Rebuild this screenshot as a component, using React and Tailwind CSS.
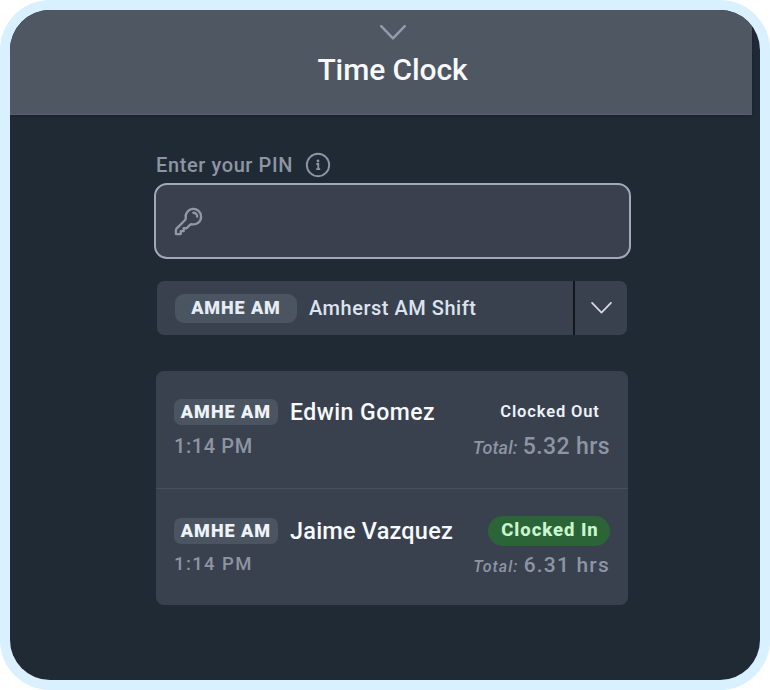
import { HiOutlineKey } from 'react-icons/hi2'

const entries = [
  {
    shift: 'AMHE AM',
    name: 'Edwin Gomez',
    time: '1:14 PM',
    hours: '5.32 hrs',
    status: 'Clocked Out',
    rowClass: 'pt-[24px]',
    nameClass: 'text-[23px] tracking-[0.48px] pt-[2px]',
    timeClass: 'text-[20px] tracking-[0.6px]',
    statusClass: 'text-[16.5px] font-semibold tracking-[0.85px] text-[#eef2f8]',
    totalClass: 'text-[18px] tracking-[0.2px]',
    hoursClass: 'text-[23px] tracking-[0.4px]',
    totalRowClass: 'pt-[3px]',
  },
  {
    shift: 'AMHE AM',
    name: 'Jaime Vazquez',
    time: '1:14 PM',
    hours: '6.31 hrs',
    status: 'Clocked In',
    rowClass: 'pt-[25px]',
    nameClass: 'text-[23.5px] tracking-[0.2px] pt-[2px]',
    timeClass: 'text-[18.5px] tracking-[1.4px]',
    statusClass: 'bg-[#2b6437] text-[18.5px] font-extrabold tracking-[0.95px] text-[#c9f5cf]',
    totalClass: 'text-[16px] tracking-[1.1px]',
    hoursClass: 'text-[21px] tracking-[1.2px]',
    totalRowClass: 'pt-[4px]',
  },
]

function Chevron({ className, strokeWidth }) {
  return (
    <svg viewBox="0 0 24 14" fill="none" stroke="currentColor" strokeWidth={strokeWidth}
      strokeLinecap="round" strokeLinejoin="round" className={className}>
      <path d="M1 1 L12 12.5 L23 1" />
    </svg>
  )
}

function InfoIcon() {
  return (
    <svg viewBox="0 0 26 26" fill="none" stroke="currentColor" className="h-[26px] w-[26px]">
      <circle cx="13" cy="13" r="11.2" strokeWidth="1.9" />
      <circle cx="13" cy="9" r="1.4" fill="currentColor" stroke="none" />
      <path d="M11.3 12h2v5M11.2 17.2h4" strokeWidth="1.8" />
    </svg>
  )
}

function EntryRow({ entry }) {
  return (
    <div className={`flex h-full justify-between px-[18px] ${entry.rowClass}`}>
      <div>
        <div className="flex h-[34px] items-center">
          <span className="flex h-[26px] w-[104px] items-center justify-center rounded-[7px] bg-[#4b5561] pb-px text-[18px] font-black tracking-[1px] text-[#eef3fb]">
            {entry.shift}
          </span>
          <span className={`ml-[12px] font-medium text-[#f7f9fd] ${entry.nameClass}`}>{entry.name}</span>
        </div>
        <div className={`flex h-[34px] items-center pb-px font-medium text-[#8d95a3] ${entry.timeClass}`}>{entry.time}</div>
      </div>
      <div className="flex flex-col items-end pt-[2px]">
        <span className={`flex h-[30px] w-[122px] items-center justify-center rounded-full pl-[2px] ${entry.statusClass}`}>
          {entry.status}
        </span>
        <div className={`flex h-[40px] items-baseline font-medium text-[#8d95a3] ${entry.totalRowClass}`}>
          <span className={`mr-[5px] italic ${entry.totalClass}`}>Total:</span>
          <span className={entry.hoursClass}>{entry.hours}</span>
        </div>
      </div>
    </div>
  )
}

export default function App() {
  return (
    <div className="h-[690px] w-[770px] overflow-hidden rounded-[50px] bg-[#d8f0ff] p-[10px] font-['Roboto','Liberation_Sans',sans-serif] whitespace-nowrap">
      <div className="h-[670px] w-[750px] overflow-hidden rounded-[40px] bg-[#202a35]">
        <header className="flex h-[105px] w-[742px] flex-col items-center border-b border-[#55606b] bg-[#4e5762] pt-[15px] pl-[23px] shadow-[0_1px_3px_#18212c]">
          <Chevron strokeWidth={2.3} className="h-[15px] w-[26px] text-[#929ba7]" />
          <h1 className="mt-[9px] text-[30px] leading-[42px] font-medium tracking-[-0.1px] text-[#f7f9fd]">Time Clock</h1>
        </header>

        <main className="ml-[144px] w-[477px] pt-[36px]">
          <div className="ml-[2px] flex h-[28px] items-center text-[#8d95a3]">
            <label className="text-[20px] font-medium tracking-[0.6px]">Enter your PIN</label>
            <span className="ml-[12px]"><InfoIcon /></span>
          </div>

          <div className="mt-[4px] flex h-[76px] items-center rounded-[13px] border-[2.5px] border-[#a1a9b7] bg-[#3a404d] pl-[17px]">
            <HiOutlineKey strokeWidth={1.8} className="h-[31px] w-[31px] text-[#9199a7]" />
          </div>

          <div className="mt-[22px] ml-[3px] flex h-[54px] w-[470px] items-stretch overflow-hidden rounded-[7px] bg-[#39414f]">
            <div className="flex flex-1 items-center border-r-2 border-[#11161f] pl-[18px]">
              <span className="flex h-[29px] w-[122px] items-center justify-center rounded-[9px] bg-[#4b5561] pb-px text-[18px] font-black tracking-[0.9px] text-[#e5ecf6]">
                AMHE AM
              </span>
              <span className="ml-[12px] text-[20px] font-medium tracking-[0.52px] text-[#dce3ee]">Amherst AM Shift</span>
            </div>
            <button className="flex w-[52px] items-center justify-center text-[#d3dae5]">
              <Chevron strokeWidth={2} className="h-[12px] w-[21px]" />
            </button>
          </div>

          <div className="mt-[36px] ml-[2px] grid h-[234px] w-[472px] grid-rows-[118px_116px] divide-y divide-[#454f5b] rounded-[8px] bg-[#39414f]">
            {entries.map((entry) => (
              <EntryRow key={entry.name} entry={entry} />
            ))}
          </div>
        </main>
      </div>
    </div>
  )
}
